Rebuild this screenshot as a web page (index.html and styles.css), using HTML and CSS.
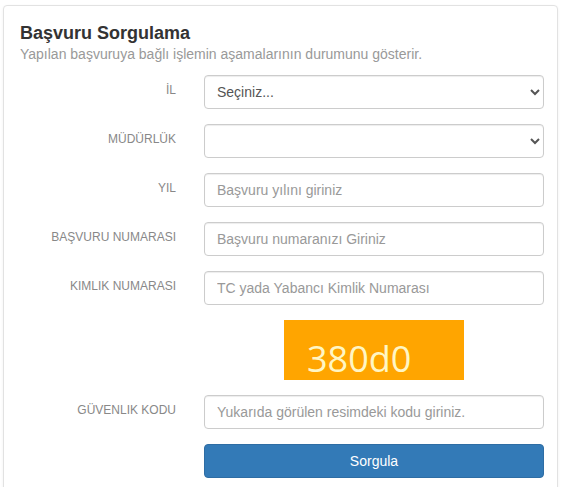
FILE: index.html
```html
<!DOCTYPE html>
<html lang="tr">
<head>
<meta charset="utf-8">
<title>Başvuru Sorgulama</title>
<link rel="stylesheet" href="styles.css">
</head>
<body>
<div class="card">
  <h1 class="title">Başvuru Sorgulama</h1>
  <p class="subtitle">Yapılan başvuruya bağlı işlemin aşamalarının durumunu gösterir.</p>
  <form class="form">
    <label class="label">İL</label>
    <select class="control select"><option>Seçiniz...</option></select>

    <label class="label">MÜDÜRLÜK</label>
    <select class="control select"><option></option></select>

    <label class="label">YIL</label>
    <input class="control" type="text" placeholder="Başvuru yılını giriniz">

    <label class="label">BAŞVURU NUMARASI</label>
    <input class="control" type="text" placeholder="Başvuru numaranızı Giriniz">

    <label class="label">KIMLIK NUMARASI</label>
    <input class="control" type="text" placeholder="TC yada Yabancı Kimlik Numarası">

    <span class="spacer"></span>
    <div class="captcha-wrap"><div class="captcha">380d0</div></div>

    <label class="label">GÜVENLIK KODU</label>
    <input class="control" type="text" placeholder="Yukarıda görülen resimdeki kodu giriniz.">

    <span class="spacer"></span>
    <button class="btn" type="button">Sorgula</button>
  </form>
</div>
</body>
</html>
```

FILE: styles.css
```css
html, body {
  margin: 0;
  padding: 0;
  background: #fff;
}
body {
  font-family: "Liberation Sans", Arial, sans-serif;
  font-size: 14px;
  color: #333;
}
.card {
  margin: 5px 3px 0 3px;
  border: 1px solid #e2e2e2;
  border-radius: 4px;
  box-shadow: 0 1px 3px rgba(0,0,0,0.06);
  padding: 17px 13px 20px 16px;
  background: #fff;
}
.title {
  margin: 0;
  font-size: 18px;
  font-weight: bold;
  line-height: 20px;
  color: #333;
}
.subtitle {
  margin: 1px 0 0 0;
  font-size: 14px;
  line-height: 20px;
  color: #999;
}
.form {
  margin-top: 11px;
  display: grid;
  grid-template-columns: 156px 340px;
  column-gap: 28px;
  row-gap: 15px;
}
.label {
  text-align: right;
  font-size: 12px;
  line-height: 17px;
  padding-top: 7px;
  color: #888;
}
.control {
  box-sizing: border-box;
  width: 340px;
  height: 34px;
  margin: 0;
  padding: 6px 12px;
  font-family: "Liberation Sans", Arial, sans-serif;
  font-size: 14px;
  color: #555;
  background: #fff;
  border: 1px solid #ccc;
  border-radius: 4px;
  box-shadow: inset 0 1px 1px rgba(0,0,0,0.075);
}
.control::placeholder {
  color: #999;
}
.select {
  padding: 6px 8px;
}
.captcha-wrap {
  display: flex;
  justify-content: center;
}
.captcha {
  width: 180px;
  height: 60px;
  box-sizing: border-box;
  background: #ffa500;
  color: #fff6c4;
  font-family: "Open Sans", sans-serif;
  font-size: 36px;
  line-height: 1;
  padding: 21px 0 0 23px;
}
.btn {
  box-sizing: border-box;
  width: 340px;
  height: 34px;
  background: #337ab7;
  border: 1px solid #2e6da4;
  border-radius: 4px;
  color: #fff;
  font-family: "Liberation Sans", Arial, sans-serif;
  font-size: 14px;
  padding: 6px 12px;
}
```
